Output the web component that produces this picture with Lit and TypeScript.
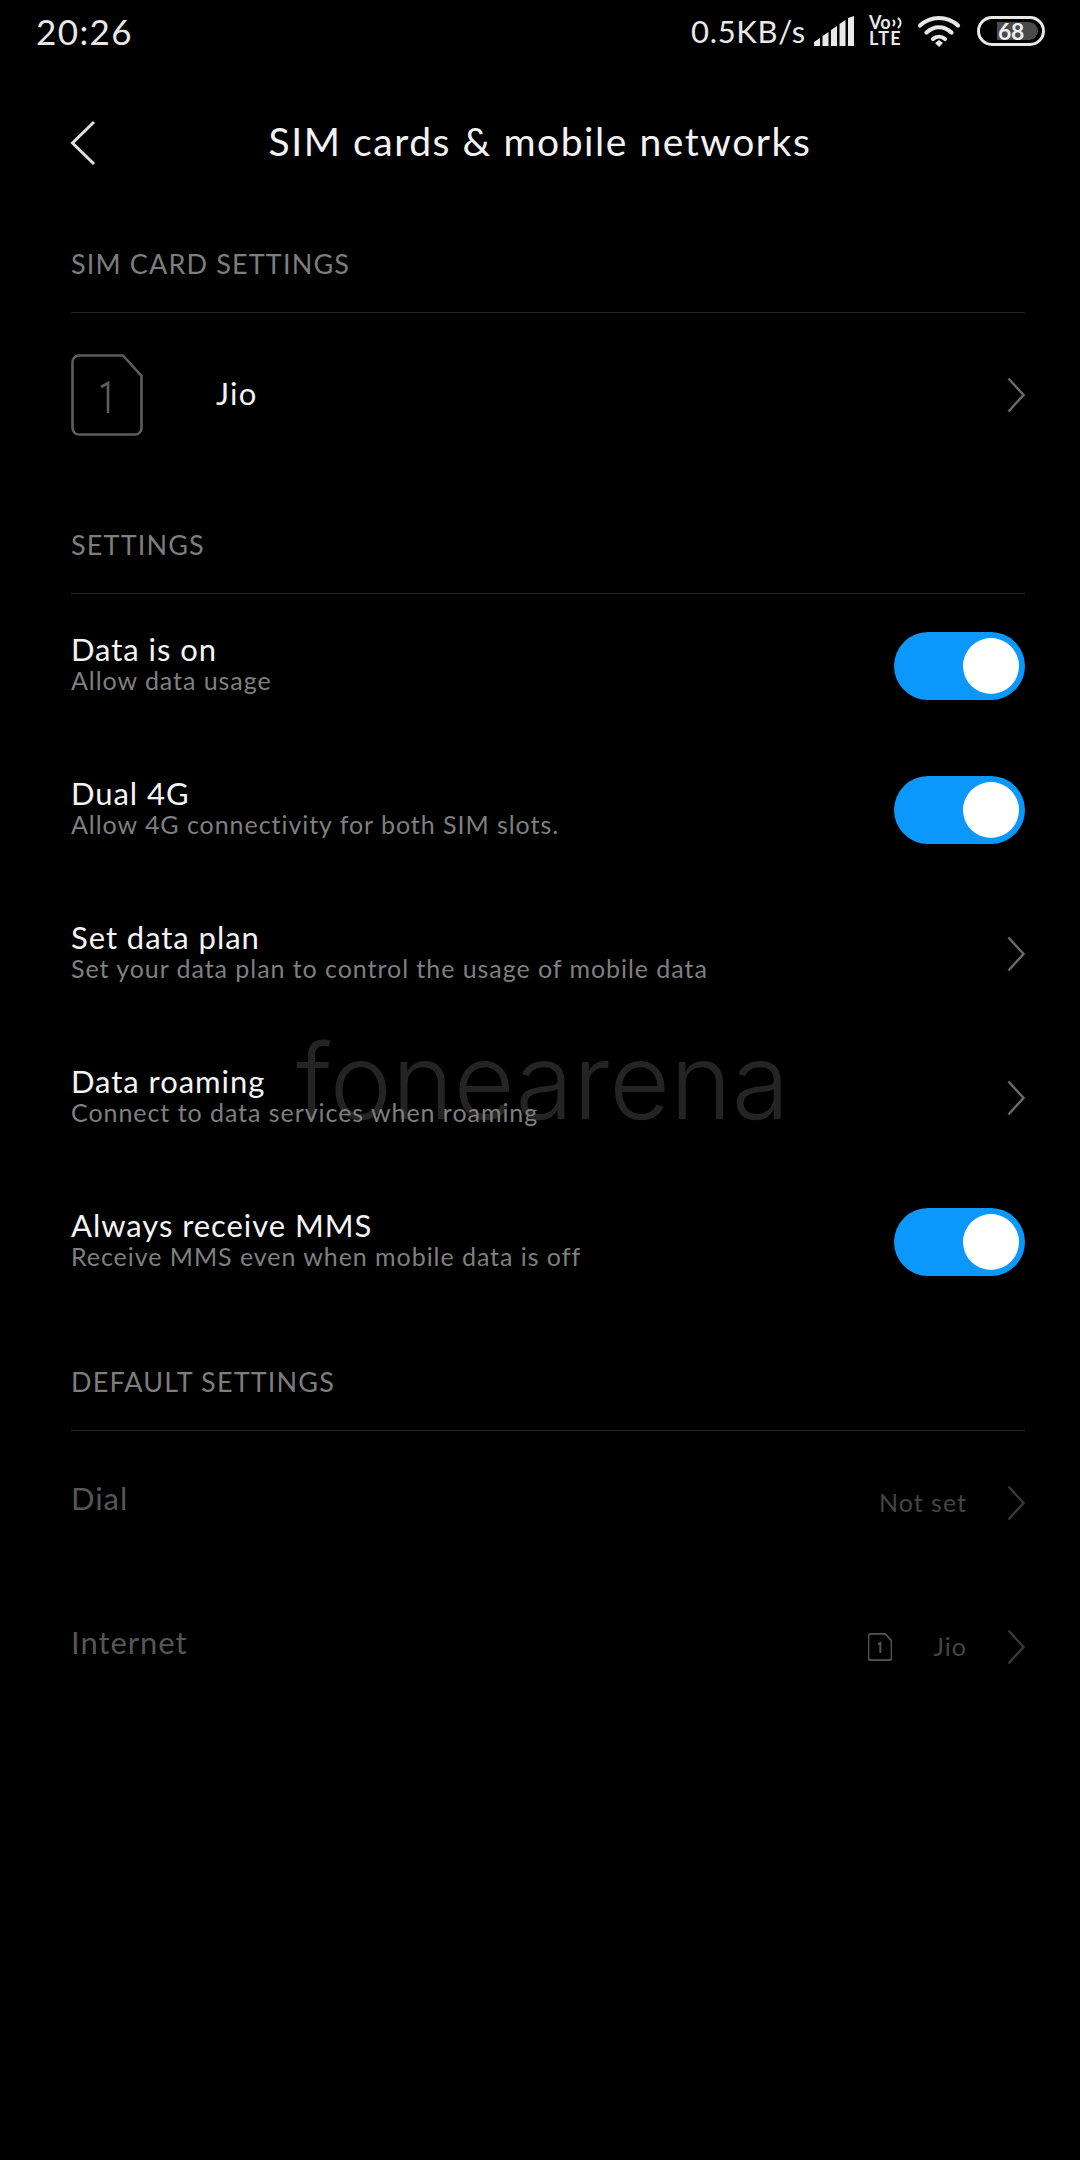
import { LitElement, html, css } from "lit";
import { customElement } from "lit/decorators.js";

const chevron = html`<svg class="chev" viewBox="0 0 18 36"><path d="M1.5 1.5 L16.5 18 L1.5 34.5" fill="none" stroke="currentColor" stroke-width="2.4"/></svg>`;

@customElement("app-root")
export class AppRoot extends LitElement {
  static styles = css`
    :host { display: block; width: 1080px; height: 2160px; background: #000; position: relative; overflow: hidden;
      font-family: "Lato", "Noto Sans", sans-serif; color: #fff; }
    .status { height: 62px; display: flex; align-items: center; padding: 0 35px 0 36px; color: #e8e8e8; }
    .time { font-size: 35px; letter-spacing: 1.4px; flex: 1; }
    .speed { font-size: 31px; letter-spacing: 0.7px; margin-right: 8px; }
    .sicons { display: flex; align-items: center; }
    .signal { width: 41px; height: 30px; }
    .volte { width: 34px; height: 32px; margin-left: 14px; display: flex; flex-direction: column; font-weight: 700; }
    .vo { display: flex; align-items: center; font-size: 18px; line-height: 15px; height: 15px; letter-spacing: .3px; }
    .arcs { width: 12px; height: 12px; margin-left: 1px; }
    .lte { font-size: 18px; line-height: 17px; letter-spacing: 1.4px; }
    .wifi { width: 44px; height: 32px; margin-left: 14px; }
    .batt { width: 68px; height: 30px; margin-left: 16px; box-sizing: border-box; border: 3px solid #e8e8e8; border-radius: 15px; padding: 3px 4px 3px 17px; }
    .batt-fill { height: 100%; background: #4a4a4a; border-radius: 0 9px 9px 0; display: flex; align-items: center; }
    .batt-num { font-size: 23px; font-weight: 700; line-height: 18px; color: #eee; margin-left: 1px; letter-spacing: -.3px; }
    .nav { height: 134px; display: grid; grid-template-columns: 1fr auto 1fr; align-items: center; padding: 24px 70px 0; box-sizing: border-box; }
    .back { width: 26px; height: 46px; color: #e0e0e0; margin-top: 4px; }
    .title { font-size: 39px; letter-spacing: 1.55px; color: #f2f2f2; white-space: nowrap; }
    .sec { height: 117px; box-sizing: border-box; margin: 0 55px 0 71px; border-bottom: 1.5px solid #262626; padding-bottom: 33px; display: flex; align-items: flex-end; font-size: 27px; letter-spacing: 1.15px; line-height: 30px; color: #7d7d7d; }
    .row { height: 144px; margin: 0 55px 0 71px; display: flex; align-items: center; position: relative; z-index: 1; }
    .simrow { height: 164px; }
    .simicon { width: 72px; height: 82px; color: #5c5c5c; margin-right: 73px; margin-left: 0; }
    .simname { font-size: 31px; flex: 1; letter-spacing: 1.2px; color: #f2f2f2; margin-top: -4px; }
    .texts { flex: 1; display: flex; flex-direction: column; margin-top: -7px; }
    .t { font-size: 31px; letter-spacing: .95px; line-height: 36px; color: #f4f4f4; }
    .s { font-size: 25px; letter-spacing: .95px; line-height: 27px; color: #7f7f7f; }
    .chev { width: 18px; height: 36px; color: #6a6a6a; flex: none; }
    .toggle { width: 131px; height: 68px; border-radius: 34px; background: #0b97fc; display: flex; align-items: center; justify-content: flex-end; padding-right: 6px; box-sizing: border-box; flex: none; }
    .knob { width: 56px; height: 56px; border-radius: 50%; background: #fff; }
    .dis .t { color: #565656; margin-top: -3px; }
    .dis .chev { color: #383838; }
    .val { font-size: 25px; letter-spacing: 1px; color: #444; margin: -3px 40px 0 0; }
    .mini { width: 24px; height: 28px; color: #555; margin-right: 41px; }
    .mark { position: absolute; left: 296px; top: 1016px; font-family: "Inter", sans-serif; font-weight: 300; font-size: 105px; line-height: 130px; color: #242424; z-index: 0; }
  `;

  sim(cls: string) {
    const mini = cls === "mini";
    return html`<svg class=${cls} viewBox="0 0 72 82"><path d="M8 1.5 H52 L70.5 22 V74 a6.5 6.5 0 0 1 -6.5 6.5 H8 a6.5 6.5 0 0 1 -6.5 -6.5 V8 a6.5 6.5 0 0 1 6.5 -6.5 Z" fill="none" stroke="currentColor" stroke-width="${mini ? 5 : 2.6}"/><path d="M30 33 L37 29 V59" fill="none" stroke="currentColor" stroke-width="${mini ? 6 : 2.6}"/></svg>`;
  }

  row(t: string, s: string, right: unknown) {
    return html`<div class="row"><div class="texts"><div class="t">${t}</div><div class="s">${s}</div></div>${right}</div>`;
  }

  render() {
    const tog = html`<div class="toggle"><div class="knob"></div></div>`;
    return html`
      <div class="mark">fonearena</div>
      <div class="status">
        <div class="time">20:26</div>
        <div class="speed">0.5KB/s</div>
        <div class="sicons">
          <svg class="signal" viewBox="0 0 41 30" fill="#e8e8e8">
            <path d="M0 30 V26 L6 22 V30 Z M8.5 30 V20 L14.5 16 V30 Z M17 30 V14 L23 10 V30 Z M25.5 30 V8 L31.5 4 V30 Z M34 30 V2 L40 0 V30 Z"/>
          </svg>
          <div class="volte"><div class="vo"><span>Vo</span><svg class="arcs" viewBox="0 0 11 12" fill="none" stroke="#e8e8e8" stroke-width="2"><path d="M1 3 C3 5 3 7 1 9"/><path d="M6 1 C9.5 4 9.5 8 6 11"/></svg></div><div class="lte">LTE</div></div>
          <svg class="wifi" viewBox="0 0 44 32" fill="none" stroke="#e8e8e8" stroke-width="4.2" stroke-linecap="round">
            <path d="M3 10.5 C14 0.5 30 0.5 41 10.5"/><path d="M9.5 17.5 C17 10.5 27 10.5 34.5 17.5"/><path d="M16 24 C19.5 21 24.5 21 28 24"/>
            <path d="M18 28 L22 25 L26 28 L22 32 Z" fill="#e8e8e8" stroke="none"/>
          </svg>
          <div class="batt"><div class="batt-fill"><span class="batt-num">68</span></div></div>
        </div>
      </div>
      <div class="nav">
        <svg class="back" viewBox="0 0 26 46"><path d="M24 2 L2.5 23 L24 44" fill="none" stroke="currentColor" stroke-width="3"/></svg>
        <div class="title">SIM cards &amp; mobile networks</div>
        <div></div>
      </div>
      <div class="sec">SIM CARD SETTINGS</div>
      <div class="row simrow">${this.sim("simicon")}<div class="simname">Jio</div>${chevron}</div>
      <div class="sec">SETTINGS</div>
      ${this.row("Data is on", "Allow data usage", tog)}
      ${this.row("Dual 4G", "Allow 4G connectivity for both SIM slots.", tog)}
      ${this.row("Set data plan", "Set your data plan to control the usage of mobile data", chevron)}
      ${this.row("Data roaming", "Connect to data services when roaming", chevron)}
      ${this.row("Always receive MMS", "Receive MMS even when mobile data is off", tog)}
      <div class="sec">DEFAULT SETTINGS</div>
      <div class="row dis"><div class="texts"><div class="t">Dial</div></div><div class="val">Not set</div>${chevron}</div>
      <div class="row dis"><div class="texts"><div class="t">Internet</div></div>${this.sim("mini")}<div class="val">Jio</div>${chevron}</div>
    `;
  }
}
